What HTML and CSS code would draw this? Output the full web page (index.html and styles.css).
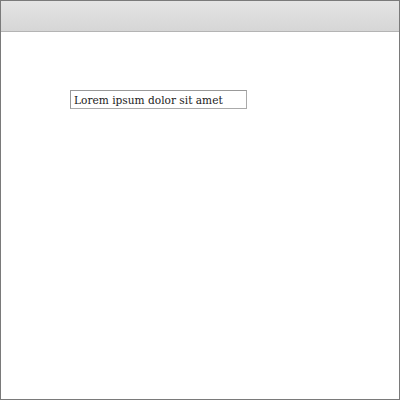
FILE: index.html
```html
<!DOCTYPE html>
<html>
<head>
<meta charset="utf-8">
<link rel="stylesheet" href="styles.css">
</head>
<body>
<div class="frame">
  <div class="toolbar"></div>
  <div class="content">
    <input class="field" type="text" value="Lorem ipsum dolor sit amet">
  </div>
</div>
</body>
</html>
```
FILE: styles.css
```css
html, body {
  margin: 0;
  padding: 0;
  background: #fff;
}
.frame {
  box-sizing: border-box;
  width: 400px;
  height: 400px;
  border: 1px solid #7a7a7a;
  display: flex;
  flex-direction: column;
}
.toolbar {
  height: 30px;
  background: linear-gradient(to bottom, #e4e4e4, #d6d6d6);
  border-bottom: 1px solid #b4b4b4;
}
.content {
  flex: 1;
  padding: 58px 0 0 69px;
}
.field {
  display: block;
  box-sizing: border-box;
  width: 177px;
  height: 19px;
  margin: 0;
  padding: 0 3px;
  border: 1px solid #999;
  border-right-color: #aaa;
  border-bottom-color: #aaa;
  font-family: "DejaVu Serif", serif;
  font-size: 10.6px;
  color: #222;
  outline: none;
  background: #fff;
}
```
